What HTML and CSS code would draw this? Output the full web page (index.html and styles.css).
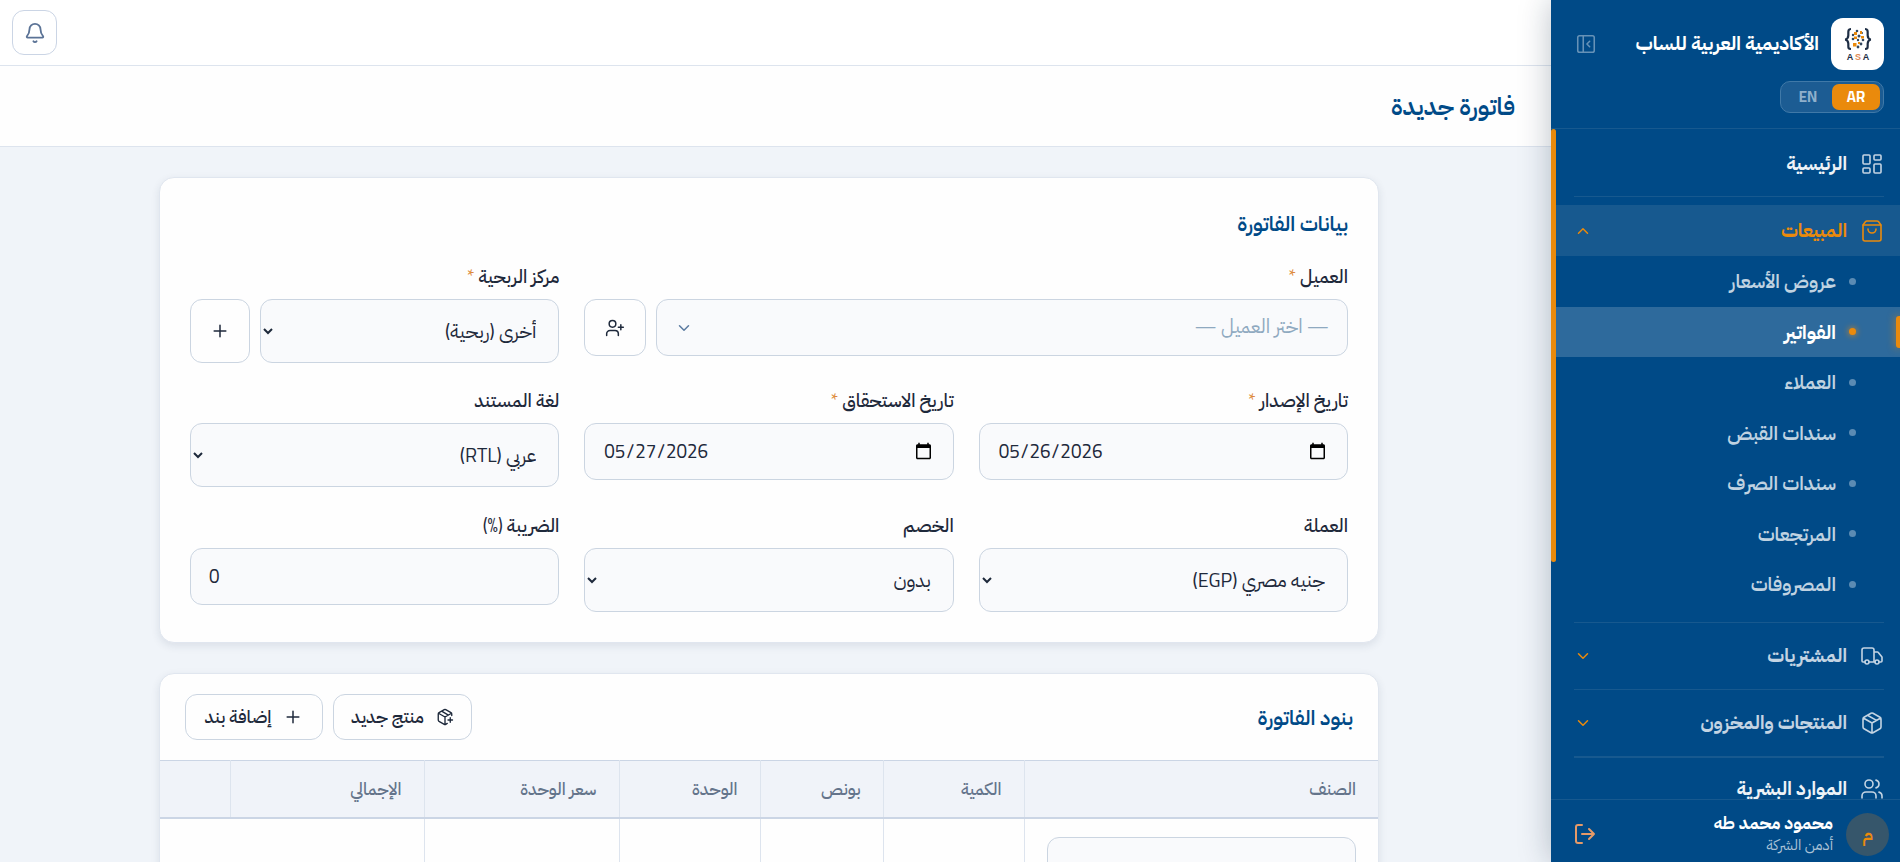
FILE: index.html
```
<!DOCTYPE html>
<html lang="ar" dir="rtl">
<head>
    <meta charset="UTF-8">
    <meta name="viewport" content="width=device-width, initial-scale=1.0">
    <title>فاتورة جديدة</title>
    <link rel="stylesheet" href="styles.css">
</head>
<body>
<aside class="sidebar">
    <div class="side-head">
        <div class="brand">
            <div class="logo">
                <svg width="28" height="34" viewBox="0 0 28 34">
                    <g fill="none" stroke="#1d2d44" stroke-width="2.2">
                        <path d="M7 2C3.500 2 4.500 5 4.300 8.500 4.200 11 3.500 12 1.200 12.500 3.500 13 4.200 14 4.300 16.500 4.500 20 3.500 22 7 22"/>
                        <path d="M21 2c3.500 0 2.500 3 2.700 6.500.1 2.500.8 3.500 3.100 4-2.300.5-3 1.500-3.100 4-.2 3.500.8 5.500-2.700 5.500"/>
                    </g>
                    <g fill="#33475f">
                        <circle cx="13" cy="4" r="1.300"/><circle cx="9" cy="8" r="1.200"/><circle cx="15" cy="9" r="1.500"/>
                        <circle cx="19" cy="13" r="1.300"/><circle cx="9" cy="12" r="1.300"/><circle cx="14" cy="13" r="1.200"/>
                        <circle cx="17" cy="17" r="1.400"/><circle cx="14" cy="20" r="1.400"/><circle cx="18" cy="6" r="1"/>
                    </g>
                    <g fill="#ea8a0c">
                        <rect x="10" y="5" width="3" height="3"/><rect x="16" y="4" width="2" height="3"/>
                        <rect x="10" y="9.500" width="3" height="2.500"/><rect x="17" y="9" width="3" height="2.500"/>
                        <rect x="9" y="16" width="3.500" height="3.500"/><rect x="14" y="15" width="2" height="2"/>
                    </g>
                    <g font-family="Liberation Sans" font-weight="700" font-size="9" text-anchor="middle" direction="ltr">
                        <text x="6" y="33" fill="#1d2d44">A</text>
                        <text x="14" y="33" fill="#e08a55">S</text>
                        <text x="22" y="33" fill="#1d2d44">A</text>
                    </g>
                </svg>
            </div>
            <span class="brand-name">الأكاديمية العربية للساب</span>
            <svg class="icon collapse" width="22" height="22" viewBox="0 0 24 24"><rect x="3" y="3" width="18" height="18" rx="2"/><path d="M9 3v18M16 15l-3-3 3-3"/></svg>
        </div>
        <div class="lang"><span class="on">AR</span><span>EN</span></div>
    </div>

    <nav class="nav">
        <div class="group">
            <a class="item strong">
                <svg class="icon" width="24" height="24" viewBox="0 0 24 24"><rect x="3" y="3" width="7" height="9" rx="1"/><rect x="14" y="3" width="7" height="5" rx="1"/><rect x="14" y="12" width="7" height="9" rx="1"/><rect x="3" y="16" width="7" height="5" rx="1"/></svg>
                <span>الرئيسية</span>
            </a>
        </div>
        <div class="group">
            <a class="item open">
                <svg class="icon" width="24" height="24" viewBox="0 0 24 24"><path d="M16 10a4 4 0 0 1-8 0M3.103 6.034h17.794"/><path d="M3.400 5.467a2 2 0 0 0-.4 1.200V20a2 2 0 0 0 2 2h14a2 2 0 0 0 2-2V6.667a2 2 0 0 0-.4-1.200l-2-2.667A2 2 0 0 0 17 2H7a2 2 0 0 0-1.600.8z"/></svg>
                <span>المبيعات</span>
                <svg class="icon chev" width="18" height="18" viewBox="0 0 24 24"><path d="m18 15-6-6-6 6"/></svg>
            </a>
            <ul class="sub">
                <li>عروض الأسعار</li>
                <li class="active">الفواتير</li>
                <li>العملاء</li>
                <li>سندات القبض</li>
                <li>سندات الصرف</li>
                <li>المرتجعات</li>
                <li>المصروفات</li>
            </ul>
        </div>
        <div class="group">
            <a class="item">
                <svg class="icon" width="24" height="24" viewBox="0 0 24 24"><path d="M14 18V6a2 2 0 0 0-2-2H4a2 2 0 0 0-2 2v11a1 1 0 0 0 1 1h2M15 18H9M19 18h2a1 1 0 0 0 1-1v-3.650a1 1 0 0 0-.22-.624l-3.480-4.350A1 1 0 0 0 17.520 8H14"/><circle cx="17" cy="18" r="2"/><circle cx="7" cy="18" r="2"/></svg>
                <span>المشتريات</span>
                <svg class="icon chev" width="18" height="18" viewBox="0 0 24 24"><path d="m6 9 6 6 6-6"/></svg>
            </a>
        </div>
        <div class="group">
            <a class="item">
                <svg class="icon" width="24" height="24" viewBox="0 0 24 24"><path d="M11 21.730a2 2 0 0 0 2 0l7-4A2 2 0 0 0 21 16V8a2 2 0 0 0-1-1.730l-7-4a2 2 0 0 0-2 0l-7 4A2 2 0 0 0 3 8v8a2 2 0 0 0 1 1.730zM12 22V12M3.290 7 12 12l8.710-5M7.500 4.270l9 5.150"/></svg>
                <span>المنتجات والمخزون</span>
                <svg class="icon chev" width="18" height="18" viewBox="0 0 24 24"><path d="m6 9 6 6 6-6"/></svg>
            </a>
        </div>
        <div class="group last">
            <a class="item strong">
                <svg class="icon" width="24" height="24" viewBox="0 0 24 24"><path d="M16 21v-2a4 4 0 0 0-4-4H6a4 4 0 0 0-4 4v2M16 3.128a4 4 0 0 1 0 7.744M22 21v-2a4 4 0 0 0-3-3.870"/><circle cx="9" cy="7" r="4"/></svg>
                <span>الموارد البشرية</span>
            </a>
        </div>
        <div class="thumb"></div>
    </nav>

    <div class="user">
        <div class="avatar">م</div>
        <div class="who">
            <b>محمود محمد طه</b>
            <small>أدمن الشركة</small>
        </div>
        <svg class="icon logout" width="24" height="24" viewBox="0 0 24 24"><path d="M9 21H5a2 2 0 0 1-2-2V5a2 2 0 0 1 2-2h4M16 17l5-5-5-5M21 12H9"/></svg>
    </div>
</aside>

<main class="main">
    <div class="topbar">
        <button class="bell"><svg class="icon" width="22" height="22" viewBox="0 0 24 24"><path d="M10.268 21a2 2 0 0 0 3.464 0M3.262 15.326A1 1 0 0 0 4 17h16a1 1 0 0 0 .740-1.673C19.410 13.956 18 12.499 18 8A6 6 0 0 0 6 8c0 4.499-1.411 5.956-2.738 7.326"/></svg></button>
    </div>
    <div class="page-head"><h1>فاتورة جديدة</h1></div>

    <div class="content">
        <section class="card form">
            <h2>بيانات الفاتورة</h2>
            <div class="grid">
                <div class="field wide">
                    <label>العميل <i>*</i></label>
                    <div class="row">
                        <div class="control picker">
                            <span>— اختر العميل —</span>
                            <svg class="icon" width="18" height="18" viewBox="0 0 24 24"><path d="m6 9 6 6 6-6"/></svg>
                        </div>
                        <button class="btn add-user"><svg class="icon" width="20" height="20" viewBox="0 0 24 24"><path d="M16 21v-2a4 4 0 0 0-4-4H6a4 4 0 0 0-4 4v2M19 8v6M22 11h-6"/><circle cx="9" cy="7" r="4"/></svg></button>
                    </div>
                </div>
                <div class="field">
                    <label>مركز الربحية <i>*</i></label>
                    <div class="row">
                        <select class="control"><option>أخرى (ربحية)</option></select>
                        <button class="btn plus"><svg class="icon" width="20" height="20" viewBox="0 0 24 24"><path d="M5 12h14M12 5v14"/></svg></button>
                    </div>
                </div>
                <div class="field">
                    <label>تاريخ الإصدار <i>*</i></label>
                    <input class="control" type="date" value="2026-05-26" dir="ltr">
                </div>
                <div class="field">
                    <label>تاريخ الاستحقاق <i>*</i></label>
                    <input class="control" type="date" value="2026-05-27" dir="ltr">
                </div>
                <div class="field">
                    <label>لغة المستند</label>
                    <select class="control"><option>عربي (RTL)</option></select>
                </div>
                <div class="field">
                    <label>العملة</label>
                    <select class="control"><option>جنيه مصري (EGP)</option></select>
                </div>
                <div class="field">
                    <label>الخصم</label>
                    <select class="control"><option>بدون</option></select>
                </div>
                <div class="field">
                    <label>الضريبة (%)</label>
                    <input class="control" type="text" value="0" dir="ltr">
                </div>
            </div>
        </section>

        <section class="card items">
            <div class="items-head">
                <h2>بنود الفاتورة</h2>
                <div class="actions">
                    <button class="btn product"><svg class="icon" width="18" height="18" viewBox="0 0 24 24"><path d="M16 16h6M19 13v6M21 10V8a2 2 0 0 0-1-1.730l-7-4a2 2 0 0 0-2 0l-7 4A2 2 0 0 0 3 8v8a2 2 0 0 0 1 1.730l7 4a2 2 0 0 0 2 0l2-1.140M7.500 4.270l9 5.150M3.290 7 12 12l8.710-5M12 22V12"/></svg><span>منتج جديد</span></button>
                    <button class="btn line"><svg class="icon" width="20" height="20" viewBox="0 0 24 24"><path d="M5 12h14M12 5v14"/></svg><span>إضافة بند</span></button>
                </div>
            </div>
            <table class="table">
                <colgroup><col class="c1"><col class="c2"><col class="c3"><col class="c4"><col class="c5"><col class="c6"><col class="c7"></colgroup>
                <thead>
                <tr><th>الصنف</th><th>الكمية</th><th>بونص</th><th>الوحدة</th><th>سعر الوحدة</th><th>الإجمالي</th><th></th></tr>
                </thead>
                <tbody>
                <tr>
                    <td><select class="control"><option>— اختر منتجًا —</option></select></td>
                    <td></td><td></td><td></td><td></td><td colspan="2"></td>
                </tr>
                </tbody>
            </table>
        </section>
    </div>
</main>
</body>
</html>
```
FILE: styles.css
```
*{
    margin: 0;
    padding: 0;
    box-sizing: border-box;
}
body{
    display: flex;
    height: 862px;
    overflow: hidden;
    background: #f0f4f9;
    color: #1e293b;
    font-family: "Titillium Web", "IBM Plex Sans Arabic", "Noto Sans Arabic", "Noto Sans", sans-serif;
    font-size: 18.5px;
}
button, select, input{
    font-family: inherit;
    color: inherit;
}
.icon{
    fill: none;
    stroke: currentColor;
    stroke-width: 2;
    stroke-linecap: round;
    stroke-linejoin: round;
    flex: none;
}

/* sidebar */
.sidebar{
    width: 349px;
    height: 862px;
    flex: none;
    display: flex;
    flex-direction: column;
    background: #004a87;
    color: #fff;
    box-shadow: 0 0 30px rgba(15,35,60,0.28);
    position: relative;
    z-index: 2;
}
.side-head{
    height: 129px;
    padding: 18px 16px 0 23px;
    border-bottom: 1px solid #17598f;
    flex: none;
}
.brand{
    display: flex;
    align-items: center;
    height: 52px;
}
.logo{
    width: 53px;
    height: 52px;
    border-radius: 12px;
    background: #fff;
    display: flex;
    align-items: center;
    justify-content: center;
}
.brand-name{
    flex: 1;
    margin-right: 12px;
    padding-bottom: 3px;
    font-size: 19.4px;
    font-weight: 700;
    white-space: nowrap;
}
.collapse{
    color: #6692b7;
    stroke-width: 1.7;
    margin-left: 1px;
}
.lang{
    width: 104px;
    height: 32px;
    margin-top: 11px;
    padding: 2px 3px;
    border: 1px solid #4079a8;
    border-radius: 10px;
    background: #1c5c93;
    display: flex;
}
.lang span{
    flex: 1;
    height: 26px;
    line-height: 26px;
    text-align: center;
    font-family: "Cairo", "Noto Sans", sans-serif;
    font-size: 15px;
    font-weight: 700;
    color: #8fb0cc;
    border-radius: 7px;
}
.lang .on{
    background: #ea8a0c;
    color: #fff;
}
.nav{
    flex: 1;
    overflow: hidden;
    position: relative;
    padding-top: 1px;
}
.thumb{
    position: absolute;
    left: 0;
    top: 0;
    width: 5px;
    height: 433px;
    border-radius: 3px;
    background: #ea8a0c;
}
.group{
    padding: 8px 0 7px;
    position: relative;
}
.group + .group::before{
    content: "";
    display: block;
    height: 1px;
    margin: -8px 16px 8px 23px;
    background: #17598f;
}
.group + .group{
    padding-top: 8px;
}
.group.last::before{
    height: 2px;
    margin-bottom: 6px;
}
.item{
    display: flex;
    align-items: center;
    height: 51px;
    padding: 0 16px 0 23px;
    color: #c3d4e3;
    font-size: 19px;
    font-weight: 700;
}
.item .icon{
    stroke-width: 1.6;
}
.item span{
    flex: 1;
    margin-right: 13px;
    padding-bottom: 2px;
}
.item.strong span{
    color: #eef3f7;
}
.item.open{
    background: #17598f;
    color: #ea8a0c;
}
.item .chev{
    color: #ea8a0c;
    stroke-width: 2;
}
.sub{
    list-style: none;
    padding-bottom: 5px;
}
.sub li{
    height: 50.5px;
    display: flex;
    align-items: center;
    gap: 13px;
    padding-right: 44px;
    font-size: 19.4px;
    font-weight: 600;
    color: #bfd2e1;
    position: relative;
}
.sub li::before{
    content: "";
    width: 7px;
    height: 7px;
    border-radius: 50%;
    background: #5b8bb3;
}
.sub .active{
    background: #2e6a9c;
    color: #fff;
    font-weight: 700;
}
.sub .active::before{
    background: #ea8a0c;
    box-shadow: 0 0 6px #ea8a0c;
}
.sub .active::after{
    content: "";
    position: absolute;
    right: 0;
    top: 9px;
    width: 4px;
    height: 32px;
    border-radius: 3px 0 0 3px;
    background: #ea8a0c;
    box-shadow: 0 0 8px rgba(234,138,12,0.8);
}
.user{
    height: 63px;
    flex: none;
    border-top: 1px solid #17598f;
    padding: 6px 11px 0 22px;
    display: flex;
    align-items: center;
}
.avatar{
    width: 43px;
    height: 43px;
    border-radius: 50%;
    background: #36566b;
    color: #ea8a0c;
    font-size: 18px;
    font-weight: 600;
    line-height: 43px;
    text-align: center;
}
.who{
    flex: 1;
    margin-right: 13px;
    line-height: 22px;
}
.who b, .who small{
    display: block;
}
.who b{
    font-size: 17.4px;
}
.who small{
    font-size: 15px;
    color: #a9c1d6;
}
.logout{
    color: #e59a68;
}

/* page */
.main{
    flex: 1;
    min-width: 0;
    height: 862px;
    overflow: hidden;
}
.topbar{
    height: 66px;
    padding: 10px 12px;
    display: flex;
    justify-content: flex-end;
    background: #fff;
    border-bottom: 1px solid #dde4ee;
}
.bell{
    width: 45px;
    height: 45px;
    border: 1px solid #cbd5e5;
    border-radius: 12px;
    background: #fff;
    color: #5b7396;
    display: flex;
    align-items: center;
    justify-content: center;
}
.page-head{
    height: 81px;
    padding: 0 36px;
    display: flex;
    align-items: center;
    background: #fefefe;
    border-bottom: 1px solid #dde4ee;
}
h1{
    font-size: 24.5px;
    font-weight: 600;
    color: #004a87;
}
h2{
    font-size: 20.8px;
    font-weight: 600;
    color: #004a87;
}
.content{
    padding: 30px 172px 0 159px;
}
.card{
    background: #fefefe;
    border: 1px solid #e0e6ef;
    border-radius: 15px;
    box-shadow: 0 3px 8px rgba(30,50,80,0.1);
    overflow: hidden;
}
.form{
    height: 466px;
    padding: 30px 30px 0;
}
.form h2{
    height: 32px;
    line-height: 30px;
}
.grid{
    display: grid;
    grid-template-columns: 1fr 1fr 1fr;
    grid-auto-rows: 124.4px;
    column-gap: 25px;
    margin-top: 25px;
}
.wide{
    grid-column: span 2;
}
.field label{
    display: block;
    height: 34px;
    line-height: 23px;
    font-weight: 500;
}
.field i{
    color: #dd8a3a;
    font-style: normal;
    font-weight: 400;
}
.row{
    display: flex;
    gap: 10px;
}
.control{
    width: 100%;
    height: 57px;
    border: 1px solid #cbd5e1;
    border-radius: 12px;
    background: #f9fafc;
    padding: 0 18px;
    font-size: 19.6px;
}
input.control{
    font-family: "Cairo", "Noto Sans", sans-serif;
    font-size: 18.8px;
}
select.control{
    height: 64px;
}
.picker{
    flex: 1;
    display: flex;
    align-items: center;
    justify-content: space-between;
    color: #8fa9c0;
}
.picker span{
    padding-bottom: 3px;
}
.picker .icon{
    color: #5b7ba0;
}
.btn{
    flex: none;
    border: 1px solid #cbd5e1;
    border-radius: 12px;
    background: #fefefe;
    display: flex;
    align-items: center;
    justify-content: center;
    gap: 12px;
    font-size: 18px;
    font-weight: 500;
}
.btn span{
    padding-bottom: 2px;
}
.add-user{
    width: 62px;
}
.plus{
    width: 60px;
}
.btn .icon{
    stroke-width: 1.8;
}
.items{
    margin-top: 30px;
    height: 400px;
}
.items-head{
    height: 86px;
    padding: 0 25px;
    display: flex;
    align-items: center;
    justify-content: space-between;
}
.actions{
    display: flex;
    gap: 10px;
}
.actions .btn{
    width: 139px;
    height: 46px;
}
.actions .line{
    width: 138px;
}
.table{
    width: 100%;
    table-layout: fixed;
    border-collapse: collapse;
}
.c1{ width: 354px; }
.c2{ width: 141px; }
.c3{ width: 123px; }
.c4{ width: 141px; }
.c5{ width: 195px; }
.c6{ width: 194px; }
.table th{
    height: 57px;
    padding: 0 22px;
    text-align: right;
    background: #f0f3f9;
    border-top: 1px solid #cbd5e5;
    border-bottom: 2px solid #cbd5e5;
    border-left: 1px solid #dde4ee;
    color: #64748b;
    font-size: 17.2px;
    font-weight: 500;
}
.table td{
    padding: 18px 22px;
    border-left: 1px solid #dde4ee;
    vertical-align: top;
}
.table td .control{
    padding-top: 5px;
}
.table th:last-child, .table td:last-child{
    border-left: none;
}
```
